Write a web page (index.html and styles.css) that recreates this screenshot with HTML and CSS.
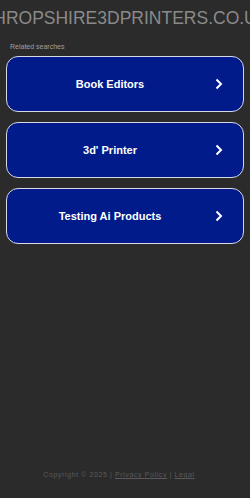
FILE: index.html
```html
<!DOCTYPE html>
<html lang="en">
<head>
    <meta charset="utf-8">
    <title>shropshire3dprinters.co.uk</title>
    <link rel="stylesheet" href="styles.css">
</head>
<body>
    <div class="page">
        <header class="domain-header">
            <h1 class="domain">shropshire3dprinters.co.uk</h1>
        </header>

        <section class="related">
            <p class="related-title">Related searches</p>
            <a class="SearchLink" href="#">
                <span class="LinkText">Book Editors</span>
                <svg class="Chevron" viewBox="0 0 8 12" width="8" height="12"><path d="M1.5 1.5 L6 6 L1.5 10.5" fill="none" stroke="#fff" stroke-width="2"/></svg>
            </a>
            <a class="SearchLink" href="#">
                <span class="LinkText">3d' Printer</span>
                <svg class="Chevron" viewBox="0 0 8 12" width="8" height="12"><path d="M1.5 1.5 L6 6 L1.5 10.5" fill="none" stroke="#fff" stroke-width="2"/></svg>
            </a>
            <a class="SearchLink" href="#">
                <span class="LinkText">Testing Ai Products</span>
                <svg class="Chevron" viewBox="0 0 8 12" width="8" height="12"><path d="M1.5 1.5 L6 6 L1.5 10.5" fill="none" stroke="#fff" stroke-width="2"/></svg>
            </a>
        </section>

        <footer class="footer">
            Copyright &copy; 2025 | <a href="#">Privacy Policy</a> | <a href="#">Legal</a>
        </footer>
    </div>
</body>
</html>
```

FILE: styles.css
```css
body {
    margin: 0; /* Remove default margin */
    background: #2b2b2b;
    font-family: "Liberation Sans", Arial, sans-serif;
}

.page {
    height: 498px;
    display: flex;
    flex-direction: column;
    overflow: hidden;
}

.domain-header {
    display: flex;
    justify-content: center;
    padding-top: 8px;
}

h1.domain {
    margin: 0;
    font-size: 17.5px;
    font-weight: normal;
    text-transform: uppercase;
    color: #8a8a8a;
    white-space: nowrap;
    line-height: 21px;
}

.related {
    padding: 0 6px;
}

p.related-title {
    margin: 14px 0 6px 4px;
    font-size: 7px;
    color: #a0a0a0;
}

a.SearchLink {
    display: flex;
    align-items: center;
    height: 54px;
    margin-bottom: 10px;
    background: #011b8b;
    border: 1px solid #d8d8e4;
    border-radius: 12px;
    text-decoration: none;
    color: white;
}

.LinkText {
    flex: 1;
    text-align: center;
    font-size: 11px;
    font-weight: bold;
    padding-left: 8px;
}

.Chevron {
    margin-right: 20px;
    margin-left: 10px;
}

.footer {
    margin-top: auto;
    margin-bottom: 20px;
    padding-right: 12px;
    text-align: center;
    font-size: 7px;
    color: #5a5a5a;
    letter-spacing: 0.6px;
}

.footer a {
    color: #5a5a5a;
}
```
